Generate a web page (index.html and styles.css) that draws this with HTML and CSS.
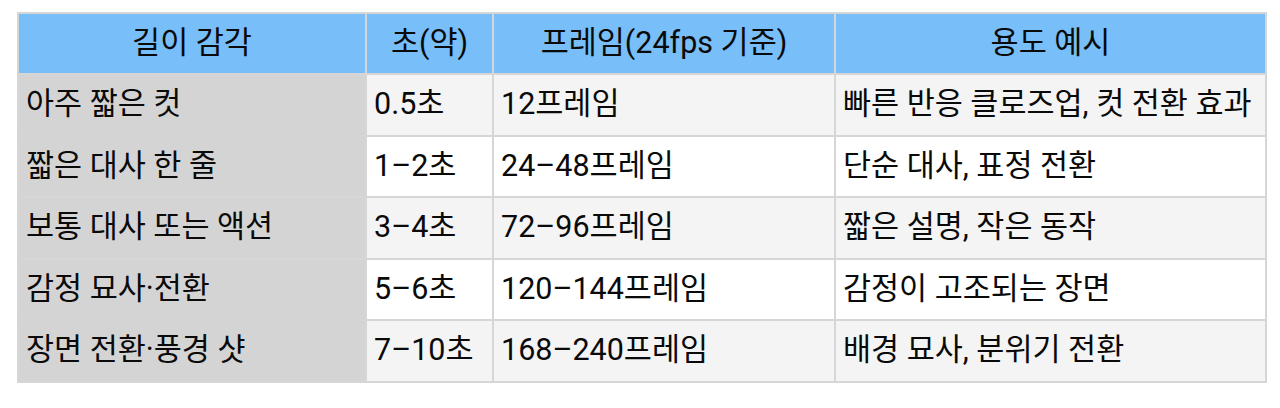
FILE: index.html
```html
<!DOCTYPE html>
<html lang="ko">
<head>
<meta charset="utf-8">
<link rel="stylesheet" href="styles.css">
</head>
<body>
<table class="tbl">
  <colgroup>
    <col class="c1"><col class="c2"><col class="c3"><col class="c4">
  </colgroup>
  <thead>
    <tr><th>길이 감각</th><th>초(약)</th><th>프레임(24fps 기준)</th><th>용도 예시</th></tr>
  </thead>
  <tbody>
    <tr class="odd"><td class="label">아주 짧은 컷</td><td>0.5초</td><td>12프레임</td><td>빠른 반응 클로즈업, 컷 전환 효과</td></tr>
    <tr><td class="label">짧은 대사 한 줄</td><td>1–2초</td><td>24–48프레임</td><td>단순 대사, 표정 전환</td></tr>
    <tr class="odd"><td class="label">보통 대사 또는 액션</td><td>3–4초</td><td>72–96프레임</td><td>짧은 설명, 작은 동작</td></tr>
    <tr><td class="label">감정 묘사·전환</td><td>5–6초</td><td>120–144프레임</td><td>감정이 고조되는 장면</td></tr>
    <tr class="odd"><td class="label">장면 전환·풍경 샷</td><td>7–10초</td><td>168–240프레임</td><td>배경 묘사, 분위기 전환</td></tr>
  </tbody>
</table>
</body>
</html>
```
FILE: styles.css
```css
html, body {
  margin: 0;
  padding: 0;
  background: #ffffff;
}
body {
  padding: 12px 0 0 17px;
  font-family: "Roboto", "Noto Sans CJK KR", sans-serif;
  color: #0a0a0a;
}
.tbl {
  border-collapse: collapse;
  table-layout: fixed;
  width: 1248px;
  font-size: 30.5px;
}
.c1 { width: 348px; }
.c2 { width: 127px; }
.c3 { width: 342px; }
.c4 { width: 431px; }
.tbl th, .tbl td {
  border: 2px solid #d6d6d6;
  padding: 0 7px;
  white-space: nowrap;
  overflow: hidden;
  line-height: 1.2;
}
.tbl th {
  background: #78bef9;
  font-weight: 400;
  height: 59px;
  text-align: center;
}
.tbl td {
  height: 59.5px;
  background: #ffffff;
  text-align: left;
}
.tbl tr.odd td {
  background: #f4f4f4;
}
.tbl td.label, .tbl tr.odd td.label {
  background: #d4d4d4;
}
```
